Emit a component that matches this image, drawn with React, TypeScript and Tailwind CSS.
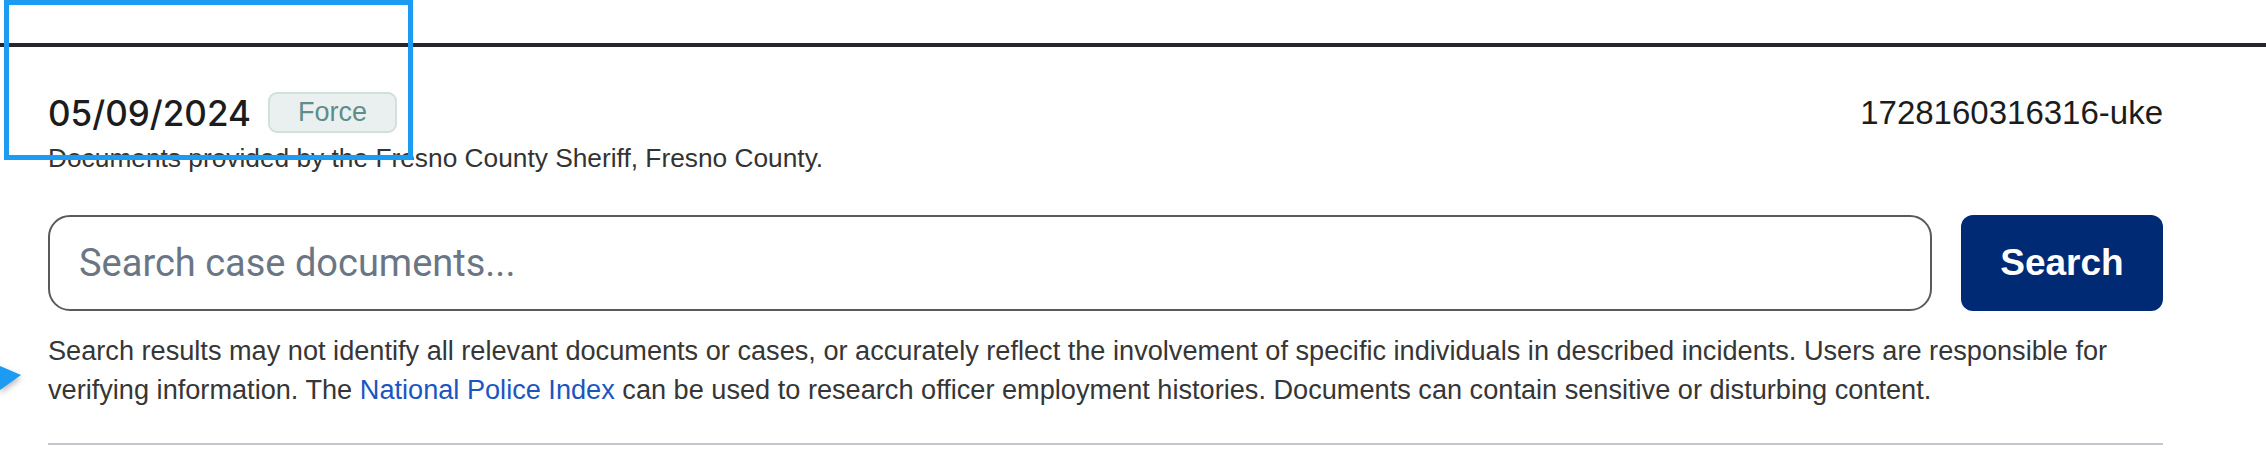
import { useState } from 'react';

export default function App() {
  const [query, setQuery] = useState('');

  return (
    <div className="relative w-[2266px] h-[457px] bg-white overflow-hidden font-['Liberation_Sans',Arial,sans-serif]">
      {/* top rule */}
      <div className="mt-[43px] h-[4px] bg-[#25272c]" />

      <div className="pl-[48px] pr-[103px]">
        {/* Case header */}
        <div className="mt-[45px] flex items-center justify-between">
          <div className="flex items-center gap-[17px]">
            <span className="font-['Inter',sans-serif] font-medium text-[35px] leading-[40px] text-[#1c1c1c]">05/09/2024</span>
            <span className="h-[41px] px-[28px] flex items-center rounded-[9px] border-2 border-[#cfe0dd] bg-[#e9f0ef] text-[27px] text-[#5e8d8b]">
              Force
            </span>
          </div>
          <span className="text-[33px] leading-[40px] text-[#1c1c1c]">1728160316316-uke</span>
        </div>
        <p className="mt-[10px] text-[26.3px] leading-[30px] text-[#333]">
          Documents provided by the Fresno County Sheriff, Fresno County.
        </p>

        {/* Search */}
        <div className="mt-[42px] flex items-stretch gap-[29px]">
          <input
            value={query}
            onChange={(e) => setQuery(e.target.value)}
            placeholder="Search case documents..."
            className="flex-1 h-[96px] px-[29px] rounded-[22px] border-2 border-[#5a5a5a] font-['Roboto',sans-serif] text-[38px] text-[#222] placeholder:text-[#6b7685] outline-none"
          />
          <button className="w-[202px] rounded-[12px] bg-[#012a74] text-white text-[37px] font-bold">
            Search
          </button>
        </div>

        <p className="mt-[20px] text-[27.15px] leading-[39px] text-[#363636]">
          Search results may not identify all relevant documents or cases, or accurately reflect the involvement of specific individuals in described incidents. Users are responsible for verifying information. The{' '}
          <a className="text-[#1b55c2]">National Police Index</a> can be used to research officer employment histories. Documents can contain sensitive or disturbing content.
        </p>

        <div className="mt-[34px] h-[2px] bg-[#c2c6cc]" />
      </div>

      {/* annotation overlay */}
      <div className="absolute left-[4px] top-0 w-[409px] h-[160px] border-[5px] border-[#1b9bf1]" />
      <svg className="absolute left-0 top-[360px] drop-shadow-[0_3px_3px_rgba(0,0,0,0.3)]" width="26" height="36" viewBox="0 0 26 36">
        <polygon points="0,6 21,15 0,30" fill="#1b9bf1" />
      </svg>
    </div>
  );
}
